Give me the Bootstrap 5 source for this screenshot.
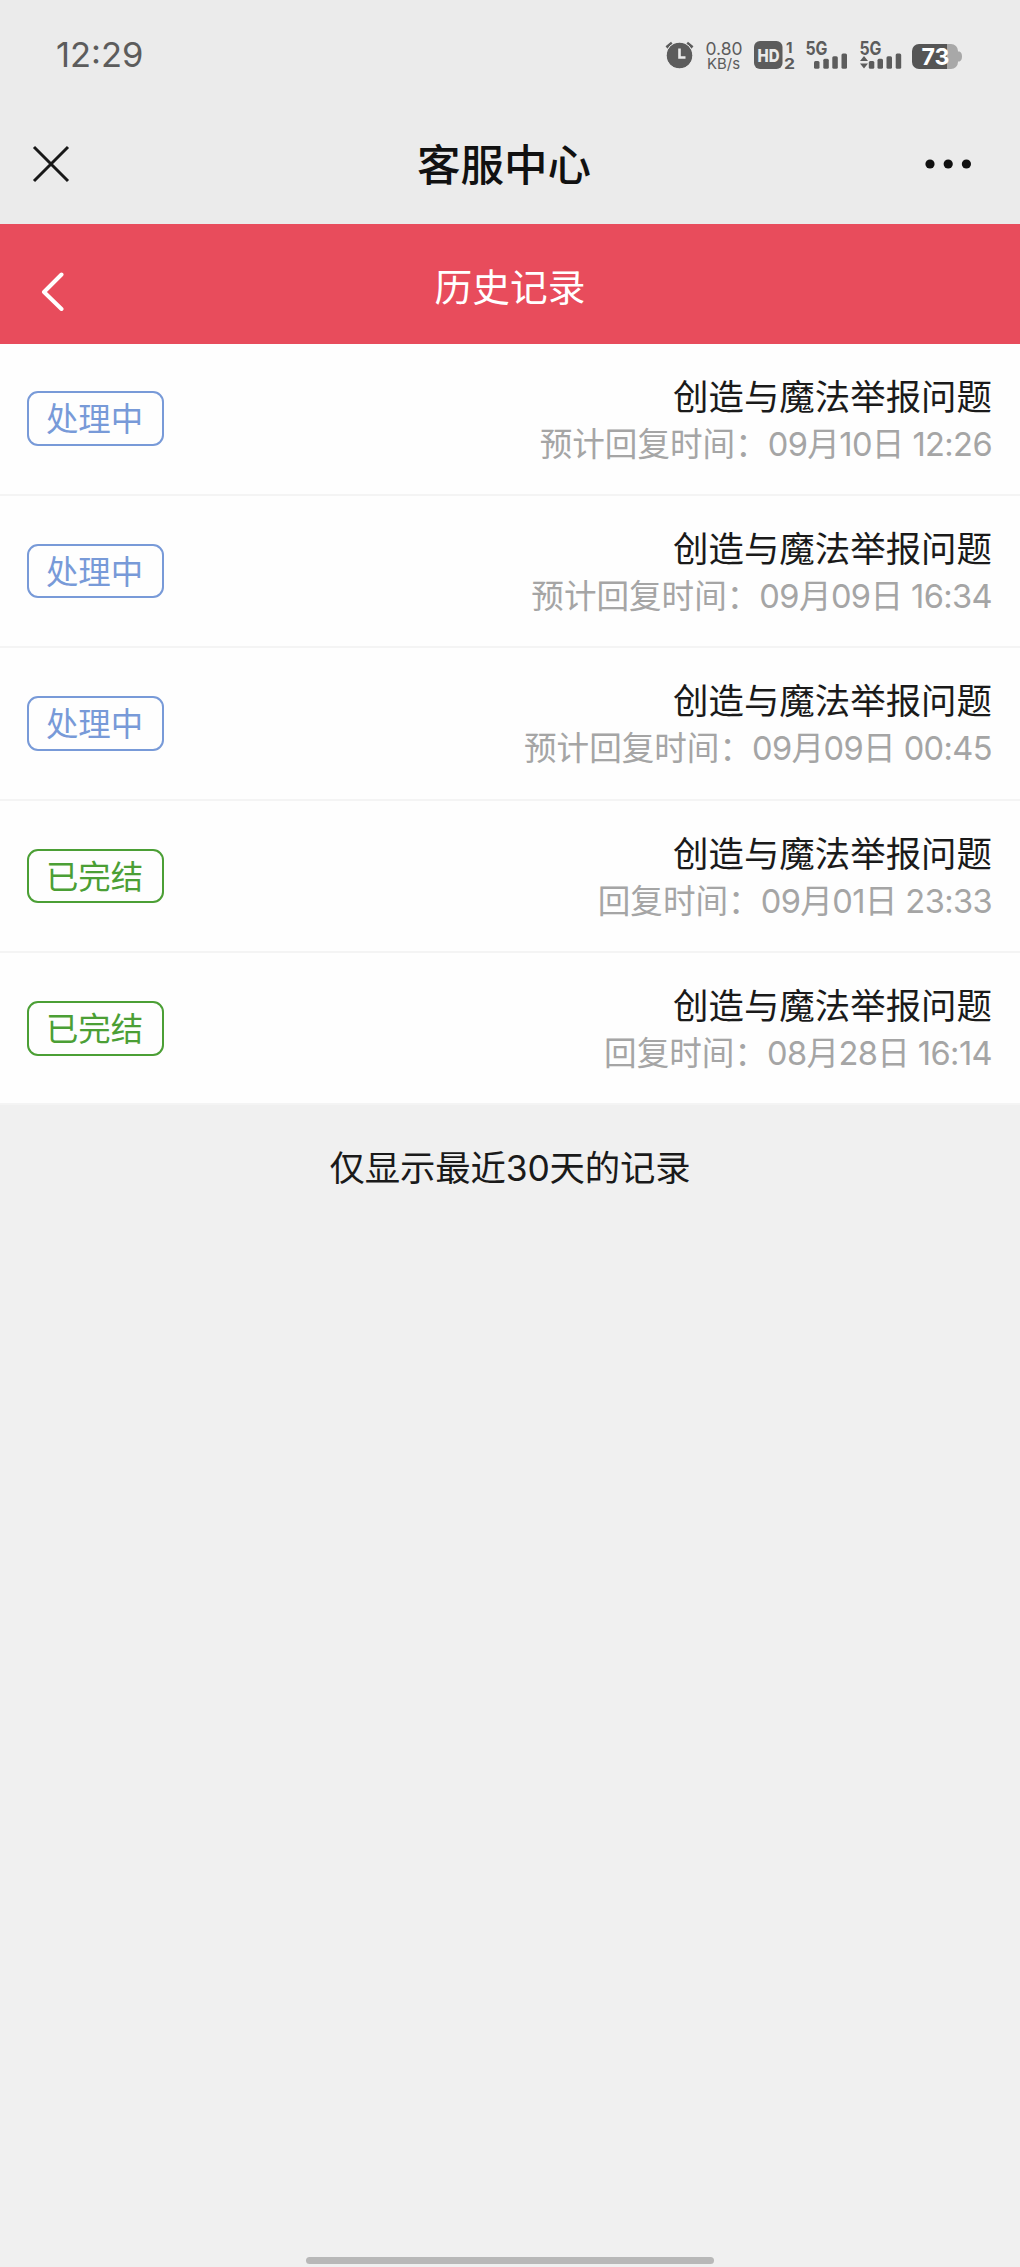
<!DOCTYPE html>
<html lang="zh-CN">
<head>
<meta charset="utf-8">
<meta name="viewport" content="width=device-width, initial-scale=1">
<title>客服中心</title>
<link href="https://cdn.jsdelivr.net/npm/bootstrap@5.3.0/dist/css/bootstrap.min.css" rel="stylesheet">
<style>
body{font-family:Inter,"Noto Sans CJK SC",sans-serif;background:#f0f0f0;color:#1a1a1a;min-height:2267px}
svg{display:block;flex:none}
.top-area{background:#ebebeb;height:224px}
.status-bar{height:109px;padding:0 57px 0 56px;color:#5c5c5c}
.clock-text{font-size:34.5px;line-height:40px;letter-spacing:0}
.title-bar{height:110px;padding:0 48px 0 32px}
.app-title{font-size:43.5px;line-height:60px;font-weight:500;color:#111;padding:2px 0 0 13px}
.page-bar{height:119.5px;background:#e84c5c;padding:0 40px}
.page-title{font-size:37.7px;line-height:50px;color:#fff;padding-top:7px}
.record{height:152.4px;padding:0 28px 0 27px;background:#fefefe;border-bottom:2px solid #f4f4f4}
.state{width:137px;height:54.5px;border:2px solid;border-radius:11px;font-size:32.4px;line-height:53px;padding-right:2px}
.pending{color:#789ad8}
.finished{color:#4b9f35}
.subject{font-size:35.45px;line-height:46px;padding-top:4px}
.when{font-size:32.6px;line-height:46px;color:#a5a5a5}
.when span{letter-spacing:-.6px}
.note-text{font-size:35.4px;line-height:48px;padding-top:40px;letter-spacing:-.15px}
.home-bar{width:408px;height:7px;border-radius:4px;background:#b8b8b8;margin-bottom:3px}
</style>
<script src="https://cdn.jsdelivr.net/npm/bootstrap@5.3.0/dist/js/bootstrap.bundle.min.js"></script>
</head>
<body class="d-flex flex-column">
<header class="top-area">
  <div class="status-bar d-flex align-items-center justify-content-between">
    <span class="clock-text">12:29</span>
    <svg width="300" height="40" viewBox="664 34 300 40" fill="#5c5c5c" font-family="Inter, sans-serif">
      <circle cx="680.5" cy="54.5" r="13"/>
      <path d="M667.500 46.500l5.500-4.500M693.500 46.500l-5.500-4.500" stroke="#5c5c5c" stroke-width="3" fill="none"/>
      <circle cx="680.5" cy="54.5" r="13.500" fill="none" stroke="#ebebeb" stroke-width="1"/>
      <path d="M680.5 47.500v9h6" stroke="#ebebeb" stroke-width="2.600" fill="none"/>
      <text x="706.500" y="53.500" font-size="17.500" textLength="37" lengthAdjust="spacingAndGlyphs">0.80</text>
      <text x="708" y="68" font-size="15" textLength="33" lengthAdjust="spacingAndGlyphs">KB/s</text>
      <rect x="755" y="40" width="28.500" height="28" rx="6"/>
      <text x="758.500" y="60.800" font-size="18" font-weight="800" fill="#ebebeb" textLength="22" lengthAdjust="spacingAndGlyphs">HD</text>
      <text x="787" y="51.500" font-size="15" font-weight="700">1</text>
      <text x="785" y="67.500" font-size="15" font-weight="700" textLength="11" lengthAdjust="spacingAndGlyphs">2</text>
      <text x="806.500" y="53.800" font-size="18.500" font-weight="700" textLength="22" lengthAdjust="spacingAndGlyphs">5G</text>
      <rect x="815" y="60" width="5.500" height="7.800" rx="1.500"/><rect x="824.300" y="57.700" width="5.500" height="10" rx="1.500"/><rect x="833.300" y="55.200" width="5.500" height="12.500" rx="1.500"/><rect x="842.500" y="52.500" width="5.500" height="15.200" rx="1.500"/>
      <text x="860.500" y="53.800" font-size="18.500" font-weight="700" textLength="22" lengthAdjust="spacingAndGlyphs">5G</text>
      <path d="M861 60l4-5 4 5zM861 62.500h8l-4 5z"/>
      <rect x="869.800" y="60" width="5.500" height="7.800" rx="1.500"/><rect x="878.500" y="57.700" width="5.500" height="10" rx="1.500"/><rect x="887.500" y="55.200" width="5.500" height="12.500" rx="1.500"/><rect x="896.700" y="52.500" width="5.500" height="15.200" rx="1.500"/>
      <path d="M948 43h4a7 7 0 0 1 7 7v.5h1.500q2.500 1 2.500 5t-2.500 5h-1.500v.5a7 7 0 0 1-7 7h-4z" fill="#a8a8a8"/>
      <path d="M920 43h28v25h-28a7 7 0 0 1-7-7v-11a7 7 0 0 1 7-7z" fill="#555"/>
      <text x="922.500" y="64" font-size="23.500" font-weight="700" fill="#fff" textLength="28" lengthAdjust="spacingAndGlyphs">73</text>
    </svg>
  </div>
  <div class="title-bar d-flex align-items-center justify-content-between">
    <svg width="38" height="38" viewBox="0 0 38 38" fill="none" stroke="#181818" stroke-width="3"><path d="M2 2l34 34M36 2L2 36"/></svg>
    <h1 class="app-title m-0">客服中心</h1>
    <svg width="47" height="10" viewBox="0 0 47 10" fill="#111"><circle cx="5" cy="5" r="4.600"/><circle cx="23.200" cy="5" r="4.600"/><circle cx="41.400" cy="5" r="4.600"/></svg>
  </div>
</header>
<nav class="page-bar d-flex align-items-center justify-content-between">
  <svg width="26" height="54" viewBox="0 0 26 54" fill="none" stroke="#fff" stroke-width="4" stroke-linecap="round" stroke-linejoin="round"><path d="M21.500 17.500L4 35 21.500 52"/></svg>
  <h2 class="page-title m-0 fw-normal">历史记录</h2>
  <svg width="26" height="42"></svg>
</nav>
<main class="flex-grow-1">
  <div class="record d-flex align-items-center justify-content-between"><div class="state pending text-center">处理中</div><div class="text-end text-nowrap"><div class="subject">创造与魔法举报问题</div><div class="when">预计回复时间：<span>09月10日 12:26</span></div></div></div>
  <div class="record d-flex align-items-center justify-content-between"><div class="state pending text-center">处理中</div><div class="text-end text-nowrap"><div class="subject">创造与魔法举报问题</div><div class="when">预计回复时间：<span>09月09日 16:34</span></div></div></div>
  <div class="record d-flex align-items-center justify-content-between"><div class="state pending text-center">处理中</div><div class="text-end text-nowrap"><div class="subject">创造与魔法举报问题</div><div class="when">预计回复时间：<span>09月09日 00:45</span></div></div></div>
  <div class="record d-flex align-items-center justify-content-between"><div class="state finished text-center">已完结</div><div class="text-end text-nowrap"><div class="subject">创造与魔法举报问题</div><div class="when">回复时间：<span>09月01日 23:33</span></div></div></div>
  <div class="record d-flex align-items-center justify-content-between"><div class="state finished text-center">已完结</div><div class="text-end text-nowrap"><div class="subject">创造与魔法举报问题</div><div class="when">回复时间：<span>08月28日 16:14</span></div></div></div>
  <p class="note-text text-center m-0">仅显示最近30天的记录</p>
</main>
<div class="home-bar mx-auto"></div>
</body>
</html>
